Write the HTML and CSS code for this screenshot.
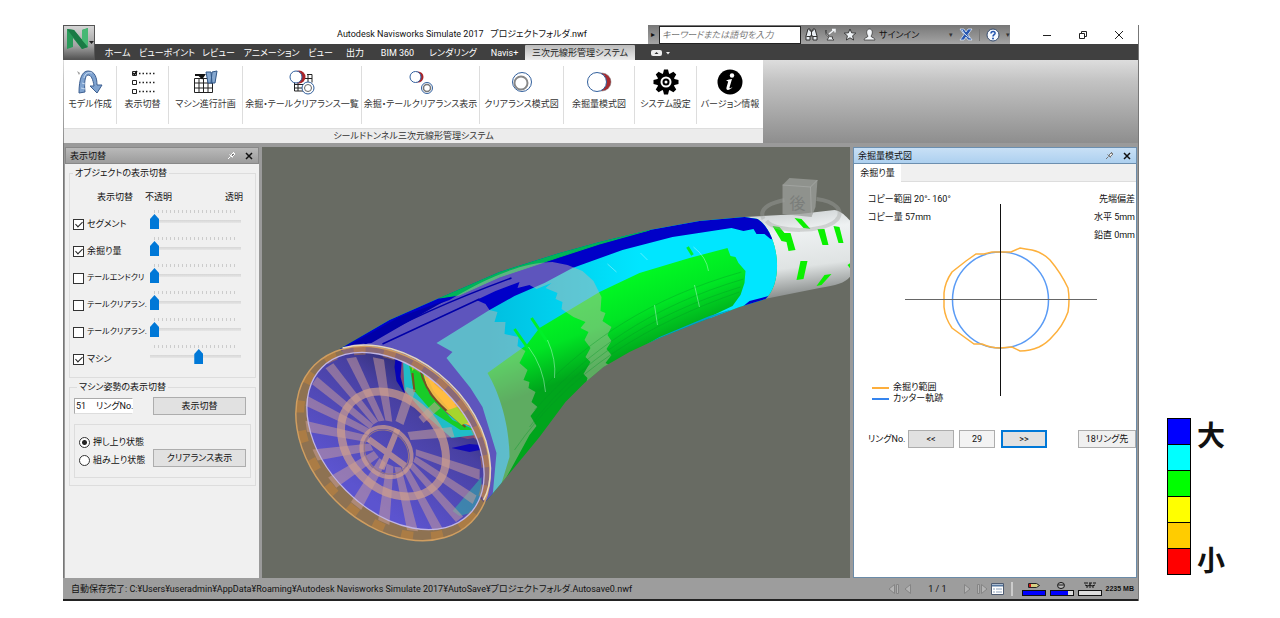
FILE: index.html
```html
<!DOCTYPE html>
<html lang="ja">
<head>
<meta charset="utf-8">
<title>Autodesk Navisworks Simulate 2017</title>
<link rel="stylesheet" href="styles.css">
</head>
<body>
<main class="page">
<div class="app">
  <header class="header">
    <button class="logo" aria-label="メニュー">
      <svg width="32" height="32" viewBox="0 0 32 32"><path d="M3 2 10 3 18 13V3L24 1V20L18 22 9 11V20L3 22Z" fill="#2b9a5a"/><path d="M3 2 10 3 24 20 18 22Z" fill="#1a7a45"/><path d="M18 3 24 1V20L18 13Z" fill="#45b874"/><path d="M25 14h5l-2.500 3z" fill="#222"/></svg>
    </button>
    <div class="titlebar">
      <h1 class="title">Autodesk Navisworks Simulate 2017 &nbsp; プロジェクトフォルダ.nwf</h1>
      <div class="infocenter">
        <button class="plain arrow" aria-label="開く">▸</button>
        <input class="search" type="text" aria-label="検索" placeholder="キーワードまたは語句を入力">
        <button class="plain" aria-label="検索"><svg width="13" height="13" viewBox="0 0 13 13"><path d="M3 1h2v2h3V1h2l2 7v4H8V8H5v4H1V8z" fill="#e8edf2" stroke="#303030"/><path d="M1.500 8.500H5M8 8.500h4M6.500 3v5" stroke="#303030"/></svg></button>
        <button class="plain" aria-label="通信センター"><svg width="13" height="13" viewBox="0 0 13 13"><path d="M2 2c0 5 3 7 7 7L8 10l2 2H3l2-3C2 8 1 5 2 2z" fill="#f2f5f8" stroke="#333" stroke-width=".8"/><path d="M5 6 10 2M8 1.500h3v3" fill="none" stroke="#f2f5f8" stroke-width="1.500"/></svg></button>
        <button class="plain" aria-label="お気に入り"><svg width="14" height="13" viewBox="0 0 14 13"><path d="m7 1 1.600 3.800 4.200.3-3.200 2.700 1 4.200L7 9.800 3.400 12l1-4.200L1.200 5.100l4.200-.3z" fill="#eef2f5" stroke="#303030" stroke-width=".9"/></svg></button>
        <button class="plain signin"><svg width="13" height="14" viewBox="0 0 13 14"><path d="M5 8C3 6 3 1 6.500 1S10 6 8 8c0 2 4 1 4 4H1c0-3 4-2 4-4z" fill="#f5f8fb" stroke="#404040" stroke-width=".8"/></svg>サインイン</button>
        <span class="drop">▾</span>
        <button class="plain" aria-label="Exchange"><svg width="14" height="13" viewBox="0 0 14 13"><path d="M1 1h4l2 3 2-3h4L9 6.500 13 12H9L7 9l-2 3H1l4-5.500z" fill="#2756b0" stroke="#dce7f5" stroke-width=".8"/><path d="M3 2c3 5 5 6 8 8" stroke="#e3edf9" fill="none"/></svg></button>
        <span class="rule"></span>
        <button class="plain" aria-label="ヘルプ"><svg width="14" height="14" viewBox="0 0 14 14"><circle cx="7" cy="7" r="6" fill="#f5f9ff" stroke="#354c70"/><path d="M5 5.500c0-3 4.500-2.500 4 0-.3 1.200-2 1.300-2 3" fill="none" stroke="#2455ae" stroke-width="1.600"/><circle cx="7" cy="10.400" r="1" fill="#2455ae"/></svg></button>
        <span class="drop">▾</span>
      </div>
      <div class="winbuttons">
        <button class="plain" aria-label="最小化"><svg width="10" height="10"><path d="M1 5.500h8" stroke="#222"/></svg></button>
        <button class="plain" aria-label="元に戻す"><svg width="10" height="10"><path d="M1.500 3.500h5v5h-5zM3.500 3V1.500h5v5H7" fill="none" stroke="#222"/></svg></button>
        <button class="plain" aria-label="閉じる"><svg width="10" height="10"><path d="m1 1 8 8M9 1 1 9" stroke="#222"/></svg></button>
      </div>
    </div>
    <nav class="tabs">
      <button>ホーム</button><button>ビューポイント</button><button>レビュー</button><button>アニメーション</button><button>ビュー</button><button>出力</button><button>BIM 360</button><button>レンダリング</button><button>Navis+</button><button class="active">三次元線形管理システム</button>
      <button aria-label="リボン"><svg width="20" height="8" viewBox="0 0 20 8"><rect x="0" y="1" width="11" height="6" rx="2" fill="#eee"/><path d="M3.500 5h4l-2-2z" fill="#333"/><path d="M15 3h4l-2 2.500z" fill="#eee"/></svg></button>
    </nav>
  </header>

  <section class="ribbon">
    <div class="ribbonpanel">
      <div class="tools">
        <button><svg width="28" height="26" viewBox="0 0 28 26"><path d="M3 24C3 10 6 2 12 2c7 0 9 7 9 14h5l-5 8-7-7h4C17 10 15 6 12 6 9 6 8 14 9 23z" fill="#7fa3d0" stroke="#3c5e90"/><path d="M8 9c1-5 4-6 8-5M6 14l3 1M5 19l4 1" stroke="#c7dbf2" fill="none"/><path d="m1 2 3 2-1 2z" fill="#999"/></svg>モデル作成</button>
        <button><svg width="28" height="26" viewBox="0 0 28 26"><path d="M3.500 2.500h4v4h-4zM3.500 11.500h4v4h-4zM3.500 20.500h4v4h-4z" fill="#fff" stroke="#222"/><path d="m4 4 1.500 1.500L8 2" fill="none" stroke="#111" stroke-width="1.500"/><path d="M10 4.500h17M10 13.500h17M10 22.500h17" stroke="#222" stroke-width="1.500" stroke-dasharray="1.500 2"/></svg>表示切替</button>
        <button><svg width="28" height="26" viewBox="0 0 28 26"><path d="M2.500 9.500h18v14h-18zM2.500 14h18M2.500 19h18M7 9.500v14M11.500 9.500v14M16 9.500v14" fill="none" stroke="#222"/><path d="M3 6h3M7 6h5l-2 3z" stroke="#111" stroke-width="2"/><path d="M14 3h5l1 11h-4zM20 3l5-1-2 12h-4z" fill="#86a8cf" stroke="#315787"/></svg>マシン進行計画</button>
        <button><svg width="28" height="26" viewBox="0 0 28 26"><path d="M6.500 10v12h11M6 15.500h9M6 19h9M10 13v9M19 5.500h5v8M17 9.500h7M20 5v8" fill="none" stroke="#222"/><circle cx="11" cy="8" r="6.500" fill="#aa2428"/><circle cx="8" cy="8" r="6" fill="#fff" stroke="#315f9d"/><circle cx="20" cy="19" r="6" fill="#fff" stroke="#315f9d"/><circle cx="20" cy="19" r="3.500" fill="none" stroke="#666"/></svg>余掘・テールクリアランス一覧</button>
        <button><svg width="28" height="26" viewBox="0 0 28 26"><circle cx="11" cy="8" r="5.500" fill="#aa2428"/><circle cx="8.500" cy="8" r="5.500" fill="#fff" stroke="#315f9d"/><circle cx="20" cy="19" r="5.500" fill="#fff" stroke="#315f9d"/><circle cx="20" cy="19" r="3.500" fill="none" stroke="#777" stroke-width="1.500"/></svg>余掘・テールクリアランス表示</button>
        <button><svg width="28" height="26" viewBox="0 0 28 26"><circle cx="14" cy="13" r="9.500" fill="#fff" stroke="#315f9d"/><circle cx="13" cy="14" r="6.500" fill="none" stroke="#888" stroke-width="2"/></svg>クリアランス模式図</button>
        <button><svg width="28" height="26" viewBox="0 0 28 26"><circle cx="17" cy="13" r="9" fill="#a62b30" stroke="#777" stroke-width=".5"/><circle cx="12" cy="13" r="9.500" fill="#fff" stroke="#315f9d"/></svg>余掘量模式図</button>
        <button><svg width="28" height="26" viewBox="0 0 28 26"><g transform="translate(14 13)"><path id="teeth" d="M-2-12.500h4l1 4v17l-1 4h-4l-1-4v-17zM-12.500-2l4-1h17l4 1v4l-4 1h-17l-4-1z"/><use href="#teeth" transform="rotate(45)"/><circle r="9"/><circle r="5.500" fill="#fff"/><circle r="3.500"/><circle r="1.500" fill="#fff"/></g></svg>システム設定</button>
        <button><svg width="28" height="26" viewBox="0 0 28 26"><circle cx="14" cy="13" r="12.500"/><circle cx="16" cy="6.500" r="2.200" fill="#fff"/><path d="M10 11.500c2-1 4-1.500 6-1.500l-2.500 8.500c-.4 1.500 1.500.5 3-.5-2 3-7 4.500-6 .5l1.700-6z" fill="#fff"/></svg>バージョン情報</button>
      </div>
      <div class="ribbonlabel">シールドトンネル三次元線形管理システム</div>
    </div>
  </section>

  <section class="workspace">
    <aside class="panel left">
      <div class="panelhead"><h2>表示切替</h2><button class="plain" aria-label="固定"><svg width="9" height="9"><path d="M1 8l2.500-2.500M2.500 3.500l3 3M4 4l2-2 2 1-3 3zM6 1l2 2" stroke="#fff" fill="#777"/></svg></button><button class="plain" aria-label="閉じる"><svg width="8" height="8"><path d="m1 1 6 6M7 1 1 7" stroke="#111" stroke-width="1.500"/></svg></button></div>
      <fieldset class="group objects">
        <legend>オブジェクトの表示切替</legend>
        <div class="colheads"><span>表示切替</span><span>不透明</span><span>透明</span></div>
        <div class="row"><label><input type="checkbox" checked><span>セグメント</span></label><div class="slide"><input type="range" value="0" aria-label="セグメント 透明度"></div></div>
        <div class="row"><label><input type="checkbox" checked><span>余掘り量</span></label><div class="slide"><input type="range" value="0" aria-label="余掘り量 透明度"></div></div>
        <div class="row long"><label><input type="checkbox"><span>テールエンドクリ</span></label><div class="slide"><input type="range" value="0" aria-label="テールエンド 透明度"></div></div>
        <div class="row long"><label><input type="checkbox"><span>テールクリアラン.</span></label><div class="slide"><input type="range" value="0" aria-label="テールクリアランス 透明度"></div></div>
        <div class="row long"><label><input type="checkbox"><span>テールクリアラン.</span></label><div class="slide"><input type="range" value="0" aria-label="テールクリアランス 透明度"></div></div>
        <div class="row"><label><input type="checkbox" checked><span>マシン</span></label><div class="slide"><input type="range" value="54" aria-label="マシン 透明度"></div></div>
      </fieldset>
      <fieldset class="group posture">
        <legend>マシン姿勢の表示切替</legend>
        <div class="pair"><label class="ring"><input type="text" value="51"><span>リングNo.</span></label><button class="btn">表示切替</button></div>
        <div class="states">
          <div class="radios">
            <label><input type="radio" name="state" checked><span>押し上り状態</span></label>
            <label><input type="radio" name="state"><span>組み上り状態</span></label>
          </div>
          <button class="btn">クリアランス表示</button>
        </div>
      </fieldset>
    </aside>

    <div class="viewport">
    <svg viewBox="262 147 589 431" preserveAspectRatio="xMidYMid slice" role="img" aria-label="トンネルモデル">
      <defs>
        <linearGradient id="white" x1="0" y1="0" x2=".15" y2="1"><stop offset="0" stop-color="#c4c9ca"/><stop offset=".3" stop-color="#eef1f2"/><stop offset=".7" stop-color="#dfe3e3"/><stop offset="1" stop-color="#8d9190"/></linearGradient>
        <linearGradient id="green" gradientUnits="userSpaceOnUse" x1="630" y1="265" x2="660" y2="345"><stop offset="0" stop-color="#00ff22"/><stop offset=".55" stop-color="#00e524"/><stop offset="1" stop-color="#00a51c"/></linearGradient>
        <linearGradient id="cyan" gradientUnits="userSpaceOnUse" x1="490" y1="0" x2="640" y2="0"><stop offset="0" stop-color="#00bfe0"/><stop offset="1" stop-color="#00e6ff"/></linearGradient>
        <linearGradient id="inside" x1="0" y1="0" x2=".2" y2="1"><stop offset="0" stop-color="#292763"/><stop offset=".35" stop-color="#4840a2"/><stop offset="1" stop-color="#5c54cf"/></linearGradient>
        <clipPath id="tube"><path d="M340 349 390 320 440 298 500 272 560 253 600 242 650 230 700 221 745 217 758 219C778 231 786 280 766 299L740 307 700 322 660 338 630 352 604 367 585 383 566 402 540 437 507 477 485 503Z"/></clipPath>
        <clipPath id="face"><ellipse cx="396" cy="441" rx="104" ry="70" transform="rotate(45 396 441)"/></clipPath>
        <path id="spoke" d="M27-4 101-7V6L27 4Z"/>
      </defs>
      <path d="M745 217 800 214 835 210C842 211 847 217 851 221V276C846 283 837 285 820 288L765 299Z" fill="url(#white)"/>
      <g fill="#0bf000"><path d="M773 226 780 227 785 233 791 233 796 250 789 251 787 242 782 241ZM795 218 802 219 811 229 804 228ZM818 229 825 229 829 245 823 245ZM834 226 840 227 844 243 839 243ZM801 261 808 261 804 279 797 280ZM825 275 832 274 822 285 817 286ZM848 265 851 263V269Z"/></g>
      <g clip-path="url(#tube)">
        <path d="M262 147H851V578H262Z" fill="url(#green)"/>
        <path d="M340 300 745 205 800 240 780 305 700 332 712 316 733 306 741 295 745 283 746 271 739 263 736 257 731 256 728 248 690 258 640 273 600 292 540 328 527 345 488 373C500 393 510 425 510 457L500 490 470 510Z" fill="url(#cyan)"/>
        <path d="M330 340V300L500 200H745L790 237 776 240 771 239 765 234 757 234 754 229 744 231 732 228 673 237 623 250 573 268 545 283 515 296 490 310 437 343 453 352 447 358 471 388 483 407 497 453 493 497 470 520 330 450Z" fill="#0000c8"/>
        <path d="M738 311 750 301 769 296 760 309Z" fill="#0000c8"/>
        <path d="m600 371 60-34 50-21 20-6v5l-70 28-50 30z" fill="#009fcc"/>
        <path d="M440 298 500 272 560 253 600 242 650 230 600 244 560 257 500 277 460 295Z" fill="#00b458" stroke="#00b458"/>
        <path d="M340 352 365 338 420 311 450 300C480 282 520 262 553 262L568 265 583 271 594 281 602 297 601 311 606 313 603 321 612 327 608 335 612 341 607 349 612 355 606 363 610 365 597 377 585 389 588 378 584 374 591 362 586 357 591 348 585 340 589 332 581 328 586 322 574 317 562 309 563 302 556 299 558 293 546 288 552 283 537 289 530 285 518 288 520 282 496 291 477 300 486 304 490 310 498 312 495 322 506 322 505 334 519 337 518 346 526 351 520 363 528 370 524 380 530 382 529 388 536 392 532 402 538 407 531 416 537 426 530 435 500 490 485 503 460 450Z" fill="#c8b4b0" opacity=".47"/>
        <path d="M350 345 400 317 447 300 410 321 372 343Z" fill="#0000a8"/>
        <g fill="none" stroke="#0000a8" stroke-width="1.500"><path d="M365 344C405 321 455 299 512 278M383 344 480 299"/></g>
        <g fill="none" stroke="#009824" opacity=".35"><path d="M515 450C570 370 650 323 740 292M530 427C580 360 650 315 741 287M535 410C590 350 650 307 744 279M540 391C590 340 650 298 742 272"/></g>
        <g fill="none" stroke="#00f028" stroke-width="3"><path d="m515 329 14 20M532 318l16 24M688 247l5 8"/></g>
        <g fill="none" stroke="#e0ffff" opacity=".4"><path d="M529 347q15 20 17 45M548 340q9 20 7 38M608 264l9 8M641 253l7 7M694 247q13 10 15 24M655 305l3 20M695 285l5 22"/></g>
      </g>
      <ellipse cx="393.500" cy="443.500" rx="111" ry="81" transform="rotate(45 393.500 443.500)" fill="#a87648" fill-opacity=".6"/>
      <ellipse cx="396" cy="441" rx="104" ry="70" transform="rotate(45 396 441)" fill="url(#inside)"/>
      <g clip-path="url(#face)">
        <path d="M397 345 420 352 460 382 488 436 468 439 447 433 427 421 409 400 402 386Z" fill="#7d4a78"/>
        <path d="M397 350 403 352 401 377 406 395 397 381 395 367Z" fill="#0502b8"/>
        <path d="M403 350 410 354 418 387 448 414 484 434 452 438 427 416 405 390Z" fill="#20bdc8"/>
        <path d="M407 350 420 355 430 394 453 420 476 430 461 430 434 413 414 390Z" fill="#18cc28"/>
        <path d="M418 352 462 380 488 433 461 422 442 407 428 389Z" fill="#edb746"/>
        <path d="M424 368C440 375 460 397 471 425L454 414 434 391Z" fill="#ffbd40"/>
        <path d="M418 356C423 396 444 408 466 427M413 373 415 392" fill="none" stroke="#775025" stroke-width="2"/>
        <path d="M446 411 460 406 476 420 462 425ZM409 354 420 360 413 371Z" fill="#a6d52d"/>
        <path d="m452 448 18-4 11 1 4-7 5 10-20 4z" fill="#1008b8"/>
        <path d="M453 511 482 477V510L460 516Z" fill="#369da9" opacity=".7"/>
      </g>
      <g transform="translate(393 444) rotate(45) scale(1 .7)" fill="#cda09a" fill-opacity=".5">
        <use href="#spoke" transform="rotate(5)"/><use href="#spoke" transform="rotate(24)"/><use href="#spoke" transform="rotate(42)"/><use href="#spoke" transform="rotate(61)"/><use href="#spoke" transform="rotate(80)"/><use href="#spoke" transform="rotate(99)"/><use href="#spoke" transform="rotate(118)"/><use href="#spoke" transform="rotate(137)"/><use href="#spoke" transform="rotate(155)"/><use href="#spoke" transform="rotate(172)"/><use href="#spoke" transform="rotate(189)"/><use href="#spoke" transform="rotate(207)"/><use href="#spoke" transform="rotate(226)"/><use href="#spoke" transform="rotate(326)"/><use href="#spoke" transform="rotate(345)"/>
      </g>
      <path d="M404 425 416 390 407 387 396 421ZM411 440 455 437 452 427 408 432ZM424 423 441 408 435 402 419 417Z" fill="#c9a09a" fill-opacity=".55"/>
      <g fill="none" stroke="#d0a08c" stroke-opacity=".7">
        <ellipse cx="394" cy="444" rx="59" ry="45" transform="rotate(45 394 444)" stroke-width="8"/>
        <ellipse cx="387" cy="452" rx="27" ry="23" transform="rotate(45 387 452)" stroke-width="4"/>
        <path d="M369 439 406 466M398 429 382 469" stroke-width="6"/>
      </g>
      <ellipse cx="387" cy="452" rx="24" ry="20" transform="rotate(45 387 452)" fill="none" stroke="#987681"/>
      <ellipse cx="393.500" cy="443.500" rx="107" ry="76" transform="rotate(45 393.500 443.500)" fill="none" stroke="#d68b32" stroke-width="8" stroke-opacity=".4" stroke-dasharray="12 18"/>
      <ellipse cx="393.500" cy="443.500" rx="111" ry="81" transform="rotate(45 393.500 443.500)" fill="none" stroke="#d09e60" stroke-width="1.500"/>
      <ellipse cx="396" cy="441" rx="104" ry="70" transform="rotate(45 396 441)" fill="none" stroke="#c0b5e4" stroke-width="1.300"/>
      <path d="M343 348C405 330 488 394 491 468Q491 488 484 500" fill="none" stroke="#e4d7bd" stroke-width="1.500"/>
      <g class="cube">
        <path d="M764 219C758 207 775 202 785 200M817 199C835 201 846 211 837 220 825 233 776 233 767 221" fill="none" stroke="#a3a6a3" stroke-width="4" opacity=".4"/>
        <path d="M783 185 790 178 818 180 816 207 812 217 783 214Z" fill="#9c9f9b" opacity=".75"/>
        <path d="M783 185 811 187 818 180M811 187 812 217" fill="none" stroke="#b4b6b3" opacity=".5"/>
        <text x="790" y="209">後</text>
      </g>
    </svg>
    </div>

    <aside class="panel right">
      <div class="panelhead"><h2>余掘量模式図</h2><button class="plain" aria-label="固定"><svg width="9" height="9"><path d="M1 8l2.500-2.500M2.500 3.500l3 3M4 4l2-2 2 1-3 3zM6 1l2 2" stroke="#777" fill="#eee"/></svg></button><button class="plain" aria-label="閉じる"><svg width="8" height="8"><path d="m1 1 6 6M7 1 1 7" stroke="#111" stroke-width="1.500"/></svg></button></div>
      <div class="subtabs"><button>余掘り量</button></div>
      <div class="diagram">
        <div class="info"><div><p>コピー範囲 20°- 160°</p><p>コピー量 57mm</p></div><div><p>先端偏差</p><p>水平 5mm</p><p>鉛直 0mm</p></div></div>
        <svg class="plot" width="192" height="192" viewBox="906 204 192 192" fill="none">
          <circle cx="1001.500" cy="300" r="48" stroke="#5a9bf5" stroke-width="1.500"/>
          <path d="M1001 252H993L985 254H977L967 261 953 272Q946 282 945 293V307Q946 318 953 328L975 344H983Q992 348 1001 348L1013 347 1021 351Q1031 351 1040 347 1048 343 1053 337 1064 326 1069 312 1071 300 1069 288 1062 273 1051 260 1043 252 1033 250 1026 249 1021 248L1012 252Z" stroke="#fdb03c" stroke-width="1.500"/>
          <path d="M906 299.500H1098" stroke="#666"/><path d="M1001.500 204V396" stroke="#111"/>
        </svg>
      </div>
      <ul class="key"><li>余掘り範囲</li><li class="cutter">カッター軌跡</li></ul>
      <div class="nav"><label for="ringno">リングNo.</label><button class="btn">&lt;&lt;</button><input id="ringno" type="text" value="29"><button class="btn focus">&gt;&gt;</button><button class="btn ahead">18リング先</button></div>
    </aside>
  </section>

  <footer class="status">
    <span class="path">自動保存完了: C:¥Users¥useradmin¥AppData¥Roaming¥Autodesk Navisworks Simulate 2017¥AutoSave¥プロジェクトフォルダ.Autosave0.nwf</span>
    <svg width="26" height="12" viewBox="0 0 26 12" fill="#b4b4b4" stroke="#858585"><path d="M7.500 1.500v9L2 6zM9.500 1.500h2v9h-2zM23.500 1.500v9L18 6z"/></svg>
    <span class="sheets">1 / 1</span>
    <svg width="42" height="14" viewBox="0 0 42 14" fill="#b4b4b4" stroke="#858585"><path d="M2.500 2.500v9L8 7zM15.500 2.500h2v9h-2zM19.500 2.500v9L25 7z"/><path d="M29.500 1.500h12v11h-12z" fill="#fff" stroke="#4d5a70"/><path d="M30 3.500h11" stroke="#56779f" stroke-width="2"/><path d="M31 7h2m1 0h6m-9 3h2m1 0h6" stroke="#8ba0bb"/></svg>
    <span class="rule"></span>
    <span class="meter"><svg width="12" height="7" viewBox="0 0 12 7"><path d="M.5 1.500h8l3 2-3 2h-8z" fill="#d6ce80" stroke="#222"/><path d="M1 2h2v3H1z" fill="#c11"/></svg><progress value="100" max="100" aria-label="鉛筆"></progress></span>
    <span class="meter"><svg width="12" height="7" viewBox="0 0 12 7"><ellipse cx="5" cy="3.500" rx="3.500" ry="3" fill="#bbb" stroke="#111"/><path d="M2 3h6" stroke="#111"/></svg><progress value="78" max="100" aria-label="ディスク"></progress></span>
    <span class="meter"><svg width="12" height="7" viewBox="0 0 12 7"><path d="M0 1h4M5 1h3M9 1h3M1 3l3 1 2-1 2 1 3-1M6 1v5M3 4v2M9 4v2" fill="none" stroke="#111"/></svg><progress value="0" max="100" aria-label="Web"></progress></span>
    <span class="memory">2235 MB</span>
  </footer>
</div>

<div class="scale">
  <div class="swatches"><i class="c1"></i><i class="c2"></i><i class="c3"></i><i class="c4"></i><i class="c5"></i><i class="c6"></i></div>
  <div class="ends"><span>大</span><span>小</span></div>
</div>
</main>
</body>
</html>
```
FILE: styles.css
```css
* { box-sizing: border-box; }
body {
  margin: 0;
  background: #fff;
  color: #111;
  font: 9px/14px Roboto, "Noto Sans CJK JP", sans-serif;
  font-feature-settings: "palt";
}
button, input { font: inherit; font-feature-settings: inherit; color: inherit; margin: 0; }
button { padding: 0; border: 0; background: none; white-space: nowrap; }
h1, h2, p, ul { margin: 0; padding: 0; font-weight: normal; }
.plain { display: inline-flex; align-items: center; justify-content: center; }

.page { display: flex; align-items: stretch; gap: 28px; min-height: 100vh; padding: 25px 55px 17px 63px; }
.app { flex: 1; min-width: 0; display: flex; flex-direction: column; background: #9a9a9a; border-right: 1px solid #777; }

.header { display: grid; grid-template-columns: 32px 1fr; grid-template-rows: 19px 16px; background: #fff; }
.logo { grid-row: 1 / 3; background: linear-gradient(#d5d5d5, #a2a2a2 60%, #555); border: 1px solid #555; overflow: hidden; display: block; }
.logo svg { display: block; }
.titlebar { display: flex; min-width: 0; }
.title { flex: 1; text-align: right; padding-right: 61px; font-size: 9px; line-height: 19px; white-space: nowrap; }
.infocenter { display: flex; align-items: center; gap: 6px; width: 362px; background: linear-gradient(#777, #a5a5a5); }
.arrow { width: 5px; font-size: 8px; margin-left: 3px; }
.search { width: 142px; height: 18px; margin-left: -3px; border: 1px solid #222; padding: 0 2px; background: #fff; font-style: italic; border-radius: 0; margin-right: -2px; }
.search::placeholder { color: #777; }
.signin { gap: 3px; margin-right: auto; }
.drop { font-size: 7px; color: #333; }
.infocenter .rule { width: 1px; height: 12px; background: #777; }
.winbuttons { display: flex; width: 128px; padding-left: 19px; }
.winbuttons button { width: 36px; }

.tabs { background: #404040; color: #fff; display: grid; padding-left: 4px; grid-template-columns: 37px 62px 41px 65px 33px 36px 49px 62px 41px 110px 52px; }
.tabs button { display: flex; align-items: center; justify-content: center; line-height: 16px; }
.tabs .active { background: linear-gradient(#bbb, #efefef); color: #222; border-radius: 1px 1px 0 0; margin-top: 1px; }

.ribbon { background: linear-gradient(#ddd, #c3c3c3 25%, #8e8e8e); padding-left: 1px; display: flex; }
.ribbonpanel { background: #fff; }
.tools { display: grid; grid-template-columns: 53px 52px 74px 119px 118px 84px 71px 62px 66px; height: 68px; padding: 6px 0 4px; }
.tools button { display: flex; flex-direction: column; align-items: center; justify-content: flex-start; gap: 2px; padding-top: 3px; color: #333; border-right: 1px solid #ddd; }
.tools button:last-child { border-right: 0; }
.tools svg { flex: none; }
.ribbonlabel { background: #ececec; border-top: 1px solid #ddd; height: 15px; line-height: 14px; text-align: center; color: #333; }

.workspace { flex: 1; display: grid; grid-template-columns: 194px 1fr 284px; gap: 3px; padding: 4px 1px 0 1px; border-left: 1px solid #777; }
.panel { background: #f0f0f0; min-width: 0; }
.panelhead { display: flex; align-items: center; gap: 9px; height: 17px; padding: 0 5px 0 4px; background: linear-gradient(#b9b9b9, #9c9c9c); border: 1px solid #888; }
.panelhead h2 { flex: 1; font-size: 9px; }

.group { min-width: 0; margin: 2px 3px 0 4px; padding: 0; border: 1px solid #ddd; }
.group legend { margin-left: 3px; padding: 0 2px; }
.objects { padding-bottom: 6px; }
.colheads { display: grid; grid-template-columns: 48px 1fr 20px; margin: 10px 10px 5px 27px; }
.row { display: grid; grid-template-columns: 77px 91px; height: 27px; margin-left: 3px; }
.row label { display: flex; align-items: center; gap: 3px; white-space: nowrap; padding-top: 3px; }
.long label { font-size: 8px; }
.row input[type=checkbox] { appearance: none; flex: none; width: 11px; height: 11px; border: 1px solid #333; background: #fff; display: grid; place-items: center; }
.row input[type=checkbox]:checked::after { content: ""; width: 3px; height: 6px; border: solid #222; border-width: 0 1px 1px 0; transform: rotate(45deg); margin-bottom: 2px; }
.slide { padding-top: 5px; background: repeating-linear-gradient(90deg, #ccc 0 1px, transparent 1px 4px) 4px 1px / 82px 3px no-repeat; }
.slide input { display: block; appearance: none; width: 91px; height: 15px; background: linear-gradient(#d6d6d6, #e6e6e6) center / 100% 3px no-repeat; }
.slide input::-webkit-slider-thumb { appearance: none; width: 9px; height: 15px; background: #0078d7; clip-path: polygon(50% 0, 100% 33%, 100% 100%, 0 100%, 0 33%); }

.btn { height: 18px; border: 1px solid #adadad; background: #e1e1e1; line-height: 14px; }
.posture { padding: 3px 4px 7px; }
.pair { display: flex; justify-content: space-between; align-items: center; padding-right: 5px; }
.pair .btn, .states .btn { width: 93px; }
.ring { display: flex; width: 59px; height: 16px; background: #fff; border: 1px solid #ccc; border-color: #aaa #fff #ddd #aaa; line-height: 14px; white-space: nowrap; }
.ring input { width: 21px; border: 0; padding: 0 1px; background: none; }
.states { display: flex; justify-content: space-between; align-items: flex-end; border: 1px solid #ddd; margin-top: 9px; padding: 10px 4px; }
.radios { display: grid; gap: 4px; }
.radios label { display: flex; align-items: center; gap: 3px; white-space: nowrap; }
.radios input { appearance: none; width: 11px; height: 11px; border: 1px solid #333; border-radius: 50%; background: #fff; }
.radios input:checked { background: radial-gradient(circle, #222 0 2px, #fff 3px); }

.viewport { position: relative; min-width: 0; background: #686b63; }
.viewport svg { position: absolute; width: 100%; height: 100%; display: block; }
.cube text { font: 16px "Noto Sans CJK JP", sans-serif; fill: #7b7e7b; }

.right { background: #fff; border: 1px solid #6b8ba8; border-top: 0; }
.right .panelhead { background: linear-gradient(#c8e0f6, #add0ef); border-color: #6c8faf; margin: 0 -1px; }
.subtabs { background: #f0f0f0; height: 18px; border-bottom: 1px solid #ddd; }
.subtabs button { background: #fff; width: 47px; height: 18px; text-align: center; }
.diagram { display: grid; grid-template-columns: 1fr; }
.info, .plot { grid-area: 1 / 1; }
.info { display: flex; justify-content: space-between; padding: 8px 1px 0 14px; line-height: 18px; }
.info div:last-child { text-align: right; }
.plot { margin: 22px 0 0 51px; }
.key { list-style: none; margin-top: -14px; padding-left: 18px; line-height: 11px; }
.key li { display: flex; align-items: center; gap: 4px; }
.key li::before { content: ""; width: 17px; height: 2px; background: #fdae3c; }
.key .cutter::before { background: #3584ee; }
.nav { display: flex; align-items: center; margin-top: 26px; padding-left: 14px; }
.nav .btn { width: 46px; }
.nav label { width: 40px; white-space: nowrap; }
.nav input { width: 36px; height: 18px; margin: 0 6px 0 5px; padding: 0; border: 1px solid #adadad; background: #f3f3f3; text-align: center; border-radius: 0; }
.nav .focus { border: 2px solid #0078d7; }
.nav .ahead { width: 58px; margin-left: auto; background: #f0f0f0; }

.status { display: flex; align-items: center; height: 23px; padding: 0 4px 0 8px; background: #9d9d9d; border-bottom: 2px solid #222; white-space: nowrap; }
.path { flex: 1; }
.sheets { padding: 0 15px 0 15px; }
.status .rule { width: 2px; height: 14px; background: #ccc; margin: 0 9px 0 7px; }
.meter { display: grid; gap: 1px; margin-right: 4px; justify-items: center; }
.meter svg { display: block; }
progress { appearance: none; display: block; width: 24px; height: 6px; border: 1px solid #111; }
progress::-webkit-progress-bar { background: #ddd; }
progress::-webkit-progress-value { background: #00f; }
.memory { font: bold 7px "Liberation Sans", sans-serif; }

.scale { display: flex; gap: 6px; align-self: flex-end; height: 157px; margin-bottom: 26px; }
.swatches { width: 24px; display: grid; grid-template-rows: repeat(6, 1fr); gap: 1px; padding: 1px; background: #000; }
.c1 { background: #00f; }
.c2 { background: #0ff; }
.c3 { background: #0f0; }
.c4 { background: #ff0; }
.c5 { background: #fc0; }
.c6 { background: #f00; }
.ends { display: flex; flex-direction: column; justify-content: space-between; font: bold 28px/32px "Noto Sans CJK JP", sans-serif; }
```
